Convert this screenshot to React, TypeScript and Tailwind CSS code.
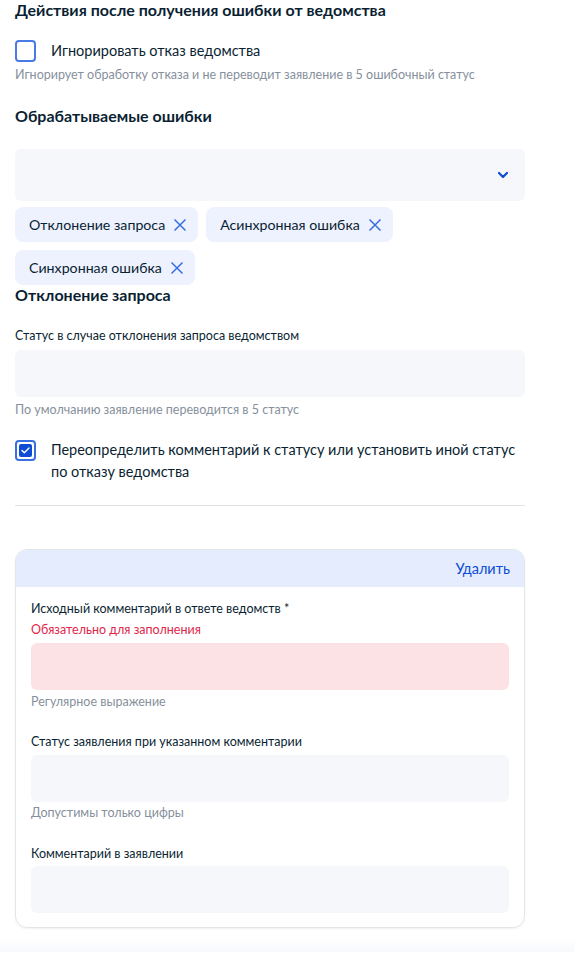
import React from 'react';

const Chip = ({ label }: { label: string }) => (
  <span className="flex h-[35px] items-center gap-[8px] rounded-lg bg-[#edf2fe] pl-[14px] pr-[11px] text-[14.2px] text-[#0b1f33]">
    {label}
    <svg width="14" height="14" viewBox="0 0 14 14" fill="none" stroke="#3a6fe0" strokeWidth="1.5">
      <path d="M1.5 1.5l11 11M12.5 1.5l-11 11" />
    </svg>
  </span>
);

const Field = ({ tone = 'gray' }: { tone?: 'gray' | 'pink' }) => (
  <div className={`h-[47px] w-full rounded-md ${tone === 'pink' ? 'bg-[#fde2e5]' : 'bg-[#f5f7fa]'}`} />
);

export default function App() {
  return (
    <div className="min-h-[964px] w-[574px] bg-white text-[#0b1f33]" style={{ fontFamily: 'Lato, "Noto Sans", sans-serif' }}>
      <div className="w-[525px] pl-[15px]">
        {/* Header section */}
        <h2 className="text-[16px] font-bold leading-[20px]">Действия после получения ошибки от ведомства</h2>

        <label className="mt-[20px] flex items-center gap-[15px]">
          <span className="h-[22px] w-[21px] rounded-[4px] border-2 border-[#4a7be5] bg-white" />
          <span className="text-[14.5px] leading-[20px]">Игнорировать отказ ведомства</span>
        </label>
        <p className="mt-[5px] text-[12.5px] leading-[16px] text-[#86909c]">
          Игнорирует обработку отказа и не переводит заявление в 5 ошибочный статус
        </p>

        <h2 className="mt-[23px] text-[16px] font-bold leading-[20px]">Обрабатываемые ошибки</h2>

        <div className="mt-[23px] flex h-[52px] items-center justify-end rounded-md bg-[#f5f7fa] pr-[16px]">
          <svg width="12" height="8" viewBox="0 0 12 8" fill="none" stroke="#0d4cd3" strokeWidth="2.2" strokeLinecap="round" strokeLinejoin="round">
            <path d="M2 2l4 4 4-4" />
          </svg>
        </div>

        <div className="mt-[6px] flex flex-wrap gap-x-[8px] gap-y-[8px]">
          <Chip label="Отклонение запроса" />
          <Chip label="Асинхронная ошибка" />
          <Chip label="Синхронная ошибка" />
        </div>

        <h3 className="text-[16px] font-bold leading-[20px]">Отклонение запроса</h3>

        <p className="mt-[23px] text-[12.5px] leading-[16px]">Статус в случае отклонения запроса ведомством</p>
        <div className="mt-[6px] h-[47px] rounded-md bg-[#f5f7fa]" />
        <p className="mt-[5px] text-[12.5px] leading-[16px] text-[#86909c]">По умолчанию заявление переводится в 5 статус</p>

        <label className="mt-[21px] flex items-start gap-[15px]">
          <span className="mt-[1px] flex h-[21px] w-[21px] shrink-0 items-center justify-center rounded-[4px] border-2 border-[#3a6fe0] bg-white p-[2px]">
            <span className="flex h-full w-full items-center justify-center rounded-[2px] bg-[#0d4cd3]">
              <svg width="9" height="7" viewBox="0 0 9 7" fill="none" stroke="white" strokeWidth="1.4" strokeLinecap="round" strokeLinejoin="round">
                <path d="M1 3.5l2.3 2.2L8 1" />
              </svg>
            </span>
          </span>
          <span className="text-[14.5px] leading-[22px]">
            Переопределить комментарий к статусу или установить иной статус по отказу ведомства
          </span>
        </label>

        <div className="mt-[22px] h-px bg-[#dfe2e6]" />

        {/* Override card */}
        <div className="mt-[43px] overflow-hidden rounded-xl border border-[#e3e5e8] shadow-[0_1px_2px_rgba(0,0,0,0.06)]">
          <div className="flex h-[37px] items-center justify-end bg-[#e4ecfd] pr-[14px]">
            <button className="text-[14.5px] text-[#0d4cd3]">Удалить</button>
          </div>
          <div className="px-[15px] pb-[14px] pt-[14px]">
            <p className="text-[12.5px] leading-[16px]">Исходный комментарий в ответе ведомств *</p>
            <p className="mt-[5px] text-[12.5px] leading-[16px] text-[#e1264a]">Обязательно для заполнения</p>
            <div className="mt-[5px]"><Field tone="pink" /></div>
            <p className="mt-[4px] text-[12.5px] leading-[16px] text-[#86909c]">Регулярное выражение</p>

            <p className="mt-[24px] text-[12.5px] leading-[16px]">Статус заявления при указанном комментарии</p>
            <div className="mt-[5px]"><Field /></div>
            <p className="mt-[3px] text-[12.5px] leading-[16px] text-[#86909c]">Допустимы только цифры</p>

            <p className="mt-[25px] text-[12.5px] leading-[16px]">Комментарий в заявлении</p>
            <div className="mt-[4px]"><Field /></div>
          </div>
        </div>
      </div>
      <div className="mt-[10px] h-[14px] w-full bg-gradient-to-b from-white to-[#f7f9fc]" />
    </div>
  );
}
